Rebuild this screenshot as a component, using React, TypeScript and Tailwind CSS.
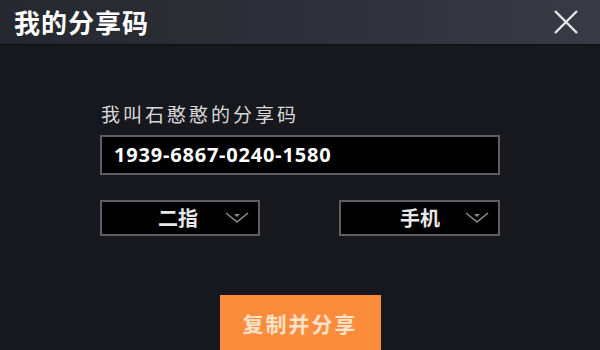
import React from "react";

const Chevron = () => (
  <svg width="24" height="12" viewBox="0 0 24 12" className="block">
    <path d="M1 1 L12 10 L23 1" fill="none" stroke="#8a8d94" strokeWidth="1.6" />
    <path d="M9 2 L15 2 L12 5 Z" fill="#8a8d94" />
  </svg>
);

export default function App() {
  const font = { fontFamily: '"Noto Sans CJK SC", "Noto Sans", sans-serif' };
  return (
    <div className="w-[600px] h-[350px] overflow-hidden bg-[#17181d] flex flex-col" style={font}>
      <div className="shrink-0 h-[45px] flex items-center justify-between pl-[14px] pr-[21px] bg-gradient-to-r from-[#262830] via-[#2d3038] to-[#383b45] border-b border-[#0e0f12]">
        <span className="text-white text-[26px] font-bold leading-none tracking-[1px]">我的分享码</span>
        <svg width="26" height="26" viewBox="0 0 26 26">
          <path d="M2 2 L24 24 M24 2 L2 24" stroke="#e6e7ea" strokeWidth="2.4" />
        </svg>
      </div>
      <div className="flex-1 flex flex-col items-center pt-[57px]">
        <div className="w-[400px]">
          <div className="text-[#d8d8da] text-[19px] leading-[24px] tracking-[3px] pl-[1px]">我叫石憨憨的分享码</div>
          <div className="mt-[9px] h-[40px] bg-black border-2 border-[#5d5f64] flex items-center pl-[12px]">
            <span className="text-white text-[20px] font-bold tracking-[0.8px]" style={{ fontFamily: '"Noto Sans", "Open Sans", sans-serif' }}>1939-6867-0240-1580</span>
          </div>
          <div className="mt-[25px] flex justify-between">
            <div className="w-[160px] h-[36px] bg-black border-2 border-[#5d5f64] flex items-center justify-end pr-[9px] gap-[27px]">
              <span className="text-[#e8e8ea] text-[20px] font-bold">二指</span>
              <Chevron />
            </div>
            <div className="w-[161px] h-[36px] bg-black border-2 border-[#5d5f64] flex items-center justify-end pr-[9px] gap-[25px]">
              <span className="text-[#e8e8ea] text-[20px] font-bold">手机</span>
              <Chevron />
            </div>
          </div>
        </div>
        <div className="shrink-0 mt-[59px] w-[161px] h-[60px] bg-[#fb8c3c] flex justify-center pt-[13px]">
          <span className="text-[#fde2cc] text-[21px] font-bold tracking-[2px]">复制并分享</span>
        </div>
      </div>
    </div>
  );
}
